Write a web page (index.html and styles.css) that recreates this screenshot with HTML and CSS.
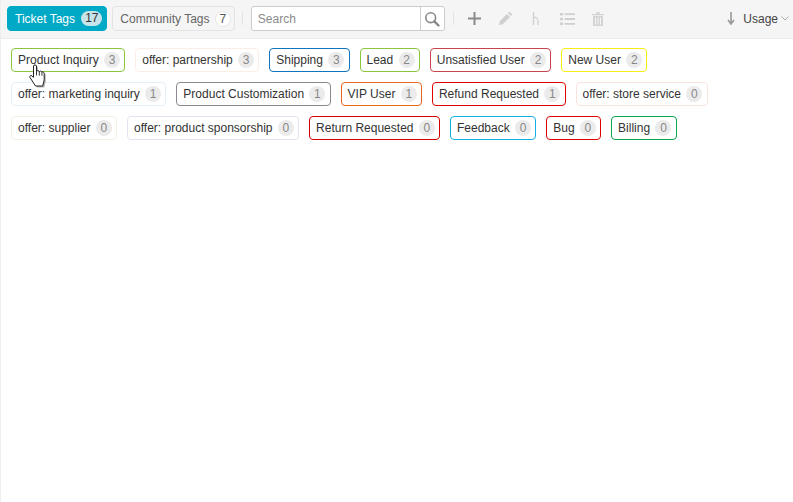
FILE: index.html
```html
<!DOCTYPE html>
<html lang="en">
<head>
<meta charset="utf-8">
<title>Tags</title>
<link rel="stylesheet" href="styles.css">
</head>
<body>
<div class="page">
  <header class="toolbar">
    <button class="tab tab-active">Ticket Tags <span class="tab-count">17</span></button>
    <button class="tab tab-plain">Community Tags <span class="tab-count tab-count-light">7</span></button>
    <span class="sep"></span>
    <div class="search">
      <span class="search-input">Search</span>
      <span class="search-btn">
        <svg width="16" height="16" viewBox="0 0 16 16"><circle cx="6.7" cy="6.700" r="4.900" fill="none" stroke="#888" stroke-width="1.600"/><path d="M10.300 10.300 L14.500 14.500" stroke="#888" stroke-width="2.400" stroke-linecap="round"/></svg>
      </span>
    </div>
    <span class="sep"></span>
    <div class="actions">
      <span class="act"><svg width="13" height="13" viewBox="0 0 13 13"><path d="M6.500 0v13M0 6.500h13" stroke="#8a8a8a" stroke-width="2"/></svg></span>
      <span class="act"><svg width="13" height="13" viewBox="0 0 13 13"><path d="M0 13l.8-3.800 7.200-7.200 3 3-7.200 7.200zM9 1l.9-.9c.3-.2.700-.2 1 0l2 2c.2.300.2.700 0 1l-.9.900z" fill="#cfcfcf"/></svg></span>
      <span class="act"><svg width="8" height="13" viewBox="0 0 8 13"><path d="M1.500 0v13M1.500 5.500c3-.5 4.500 1 4.500 3.500v4" fill="none" stroke="#d0d0d0" stroke-width="1.300"/></svg></span>
      <span class="act"><svg width="15" height="12" viewBox="0 0 15 12"><path d="M0 0h3v2.400H0zM0 4.800h3v2.400H0zM0 9.600h3V12H0zM4.500 .3H15v1.800H4.500zM4.500 5.100H15v1.800H4.500zM4.500 9.900H15v1.800H4.500z" fill="#cfcfcf"/></svg></span>
      <span class="act"><svg width="12" height="14" viewBox="0 0 12 14"><path d="M0 2h12v1.300H0zM4 .3h4V2H4zM1 4h10v10H1zM3 5.500v7h1v-7zM5.500 5.500v7h1v-7zM8 5.500v7h1v-7z" fill="#d4d4d4" fill-rule="evenodd"/></svg></span>
    </div>
    <div class="sort">
      <svg width="8" height="13" viewBox="0 0 8 13"><path d="M4 0v11M1 8l3 4 3-4" fill="none" stroke="#999" stroke-width="1.600"/></svg>
      <span class="sort-label">Usage</span>
      <svg width="8" height="5" viewBox="0 0 8 5"><path d="M.5.500L4 4 7.500.5" fill="none" stroke="#aaa"/></svg>
    </div>
  </header>
  <main class="tags">
    <span class="tag" style="border-color:#8cc63f">Product Inquiry <span class="count">3</span></span>
    <span class="tag" style="border-color:#fbeee8">offer: partnership <span class="count">3</span></span>
    <span class="tag" style="border-color:#0f75bc">Shipping <span class="count">3</span></span>
    <span class="tag" style="border-color:#8cc63f">Lead <span class="count">2</span></span>
    <span class="tag" style="border-color:#c9454b">Unsatisfied User <span class="count">2</span></span>
    <span class="tag" style="border-color:#f9ee13">New User <span class="count">2</span></span>
    <span class="tag" style="border-color:#e3f0f7">offer: marketing inquiry <span class="count">1</span></span>
    <span class="tag" style="border-color:#8a8a8a">Product Customization <span class="count">1</span></span>
    <span class="tag" style="border-color:#e8651a">VIP User <span class="count">1</span></span>
    <span class="tag" style="border-color:#e00000">Refund Requested <span class="count">1</span></span>
    <span class="tag" style="border-color:#f8e4de">offer: store service <span class="count">0</span></span>
    <span class="tag" style="border-color:#f0f2e2">offer: supplier <span class="count">0</span></span>
    <span class="tag" style="border-color:#e3e3f0">offer: product sponsorship <span class="count">0</span></span>
    <span class="tag" style="border-color:#d40000">Return Requested <span class="count">0</span></span>
    <span class="tag" style="border-color:#12b2e2">Feedback <span class="count">0</span></span>
    <span class="tag" style="border-color:#e00000">Bug <span class="count">0</span></span>
    <span class="tag" style="border-color:#0aa650">Billing <span class="count">0</span></span>
  </main>
  <svg class="cursor" width="18" height="25" viewBox="0 0 18 25">
    <path transform="translate(1.500 1.500)" d="M4.500 2c0-1.400 3-1.400 3 0v5.500c.5-1.200 2.500-1.200 2.800.2.500-1 2.400-.8 2.600.6.600-.8 2.300-.4 2.300 1V16l-1.500 6H6.500L1 13.500c-.8-1.500.8-2.600 2-1.600l1.500 1.500z" fill="#000" fill-opacity=".3"/>
    <path d="M4.500 2c0-1.400 3-1.400 3 0v5.500c.5-1.200 2.500-1.200 2.800.2.500-1 2.400-.8 2.600.6.600-.8 2.300-.4 2.300 1V16l-1.500 6H6.500L1 13.500c-.8-1.500.8-2.600 2-1.600l1.500 1.500z" fill="#fff" stroke="#222" stroke-linejoin="round"/>
    <path d="M7.500 7.500v4M10.300 7.700v4M12.900 8.300v3.500" stroke="#222" stroke-width=".9" fill="none"/>
  </svg>
</div>
</body>
</html>
```

FILE: styles.css
```css
* { box-sizing: border-box; }
html, body { margin: 0; height: 100%; }
body {
  background: #fff;
  font-family: "Liberation Sans", Arial, sans-serif;
  font-size: 12px;
  color: #333;
  overflow: hidden;
}
.page {
  position: relative;
  height: 502px;
  border-left: 1px solid #eee;
}
.toolbar {
  display: flex;
  align-items: center;
  height: 39px;
  padding: 0 4px 1px 6px;
  background: #f5f5f5;
  border-bottom: 1px solid #ececec;
}
.tab {
  display: inline-flex;
  align-items: center;
  height: 25px;
  margin-right: 5px;
  font: 12px "Liberation Sans", Arial, sans-serif;
  color: #666;
  background: #f5f5f5;
  border: 1px solid #e3e3e3;
  border-radius: 4px;
  white-space: pre;
}
.tab-plain { padding: 0 3px 0 7px; }
.tab-active {
  padding: 0 4px 0 7px;
  color: #fff;
  background: #00a9c6;
  border-color: #00a9c6;
}
.tab-count {
  display: inline-block;
  min-width: 21px;
  height: 15px;
  margin-left: 3px;
  padding: 0 3px;
  font-size: 12px;
  line-height: 15px;
  text-align: center;
  color: #333;
  background: #c6e4ea;
  border-radius: 8px;
}
.tab-count-light {
  min-width: 16px;
  height: 16px;
  margin-left: 2px;
  padding: 0;
  line-height: 14px;
  color: #555;
  background: #fff;
  border: 1px solid #e8e8e8;
}
.sep {
  width: 1px;
  height: 13px;
  margin: 0 8px 0 2px;
  background: #e2e2e2;
}
.search {
  display: flex;
  width: 194px;
  height: 25px;
  background: #fff;
  border: 1px solid #ccc;
  border-radius: 3px;
}
.search-input {
  flex: 1;
  padding: 1px 0 0 6px;
  line-height: 23px;
  color: #8a8a8a;
}
.search-btn {
  display: flex;
  align-items: center;
  justify-content: center;
  width: 24px;
  border-left: 1px solid #ccc;
}
.search + .sep { margin: 0 0 0 8px; }
.actions {
  display: flex;
  align-items: center;
  margin-left: 5px;
}
.act {
  display: flex;
  align-items: center;
  justify-content: center;
  width: 31px;
}
.sort {
  display: flex;
  align-items: center;
  gap: 8px;
  margin-left: auto;
}
.sort-label { color: #444; margin-right: -5px; }
.tags {
  display: flex;
  flex-wrap: wrap;
  gap: 10px;
  padding: 9px 0 0 10px;
}
.tag {
  display: inline-flex;
  align-items: center;
  height: 24px;
  padding: 0 4.200px 0 6px;
  line-height: 22px;
  background: #fff;
  border: 1px solid;
  border-radius: 4px;
  white-space: pre;
}
.count {
  display: inline-block;
  width: 16px;
  height: 16px;
  margin-left: 2px;
  font-size: 12px;
  line-height: 16px;
  text-align: center;
  color: #888;
  background: #ebebeb;
  border-radius: 50%;
}
.cursor {
  position: absolute;
  left: 28px;
  top: 64px;
}
```
